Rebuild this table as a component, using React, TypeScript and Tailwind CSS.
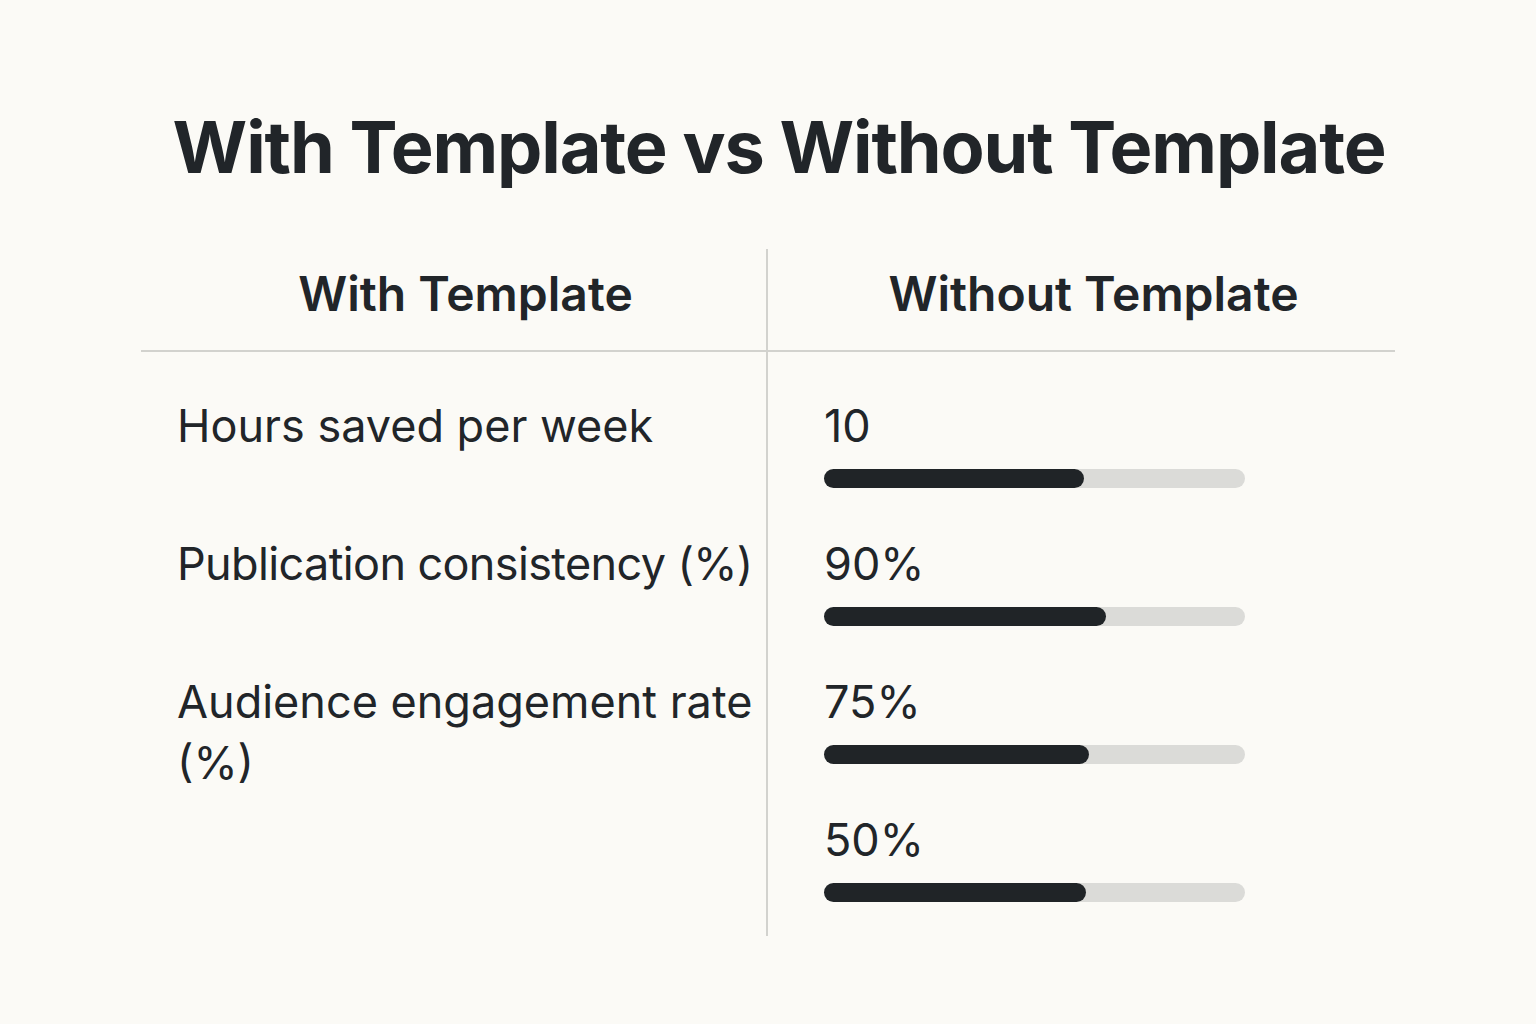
const rows = [
  { label: "Hours saved per week", value: "10", fill: 260, nowrap: false },
  { label: "Publication consistency (%)", value: "90%", fill: 282, nowrap: true },
  { label: "Audience engagement rate (%)", value: "75%", fill: 265, nowrap: false },
  { label: "", value: "50%", fill: 262, nowrap: false },
];

export default function App() {
  return (
    <div
      className="min-h-screen w-full bg-[#fbfaf6] text-[#212529]"
      style={{ fontFamily: "Inter, 'Noto Sans', sans-serif" }}
    >
      <h1 className="pt-[111px] pl-[22px] text-center text-[72px] font-bold leading-none tracking-[-0.016em]">
        With Template vs Without Template
      </h1>

      <div className="mx-auto mt-[66px] grid w-[1254px] grid-cols-2">
        {/* header */}
        <div className="h-[103px] border-r-2 border-b-2 border-[#d2d2ce] pt-[21px] pl-[24px] text-center text-[48px] font-semibold leading-[48px]">
          With Template
        </div>
        <div className="h-[103px] border-b-2 border-[#d2d2ce] pt-[21px] pl-[24px] text-center text-[48px] font-semibold leading-[48px]">
          Without Template
        </div>

        {/* labels */}
        <div className="flex flex-col gap-[45px] border-r-2 border-[#d2d2ce] pt-[43px] pb-[34px] pl-[36px]">
          {rows.map((r, i) => (
            <div
              key={i}
              className={`h-[93px] text-[45px] leading-[61px] ${r.nowrap ? "whitespace-nowrap tracking-[-0.014em]" : ""}`}
            >
              {r.label}
            </div>
          ))}
        </div>

        {/* values */}
        <div className="flex flex-col gap-[45px] pt-[43px] pb-[34px] pl-[56px]">
          {rows.map((r, i) => (
            <div key={i} className="h-[93px]">
              <div className="text-[45px] leading-[62px]">{r.value}</div>
              <div className="mt-[12px] h-[19px] w-[421px] rounded-full bg-[#dbdbd8]">
                <div className="h-full rounded-full bg-[#202427]" style={{ width: r.fill }} />
              </div>
            </div>
          ))}
        </div>
      </div>
    </div>
  );
}
